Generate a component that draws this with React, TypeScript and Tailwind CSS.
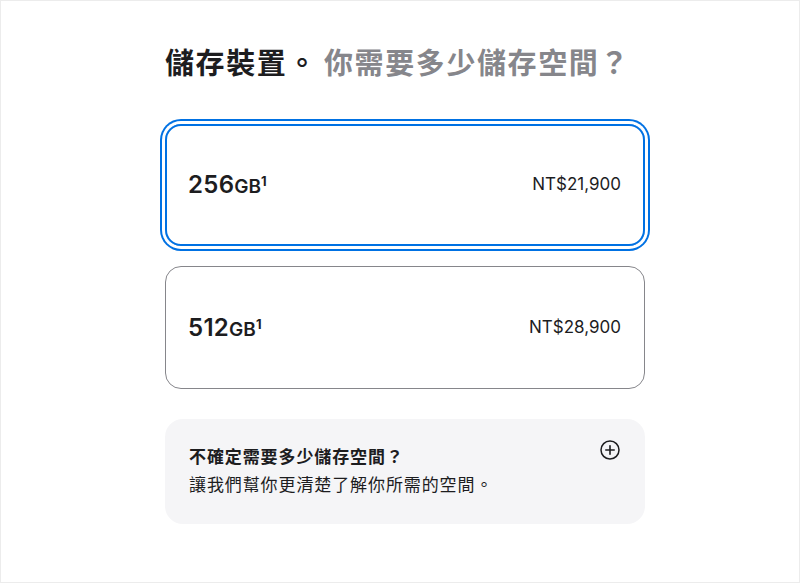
import React from "react";

const font = {
  fontFamily:
    'Inter, "Noto Sans CJK TC", "Noto Sans", sans-serif',
};

export default function App() {
  return (
    <div
      className="w-[800px] h-[583px] bg-white border border-[#ececec] overflow-hidden"
      style={font}
    >
      <div className="ml-[164px] w-[480px] pt-[45px]">
        <h2 className="text-[29px] leading-[36px] font-semibold tracking-[1.6px] text-[#1d1d1f]">
          儲存裝置。<span className="ml-[6px] text-[#86868b]">你需要多少儲存空間？</span>
        </h2>

        <div className="mt-[42px] flex flex-col gap-[20px]">
          <div className="h-[122px] rounded-[16px] border-2 border-[#0071e3] shadow-[0_0_0_3px_#ffffff,0_0_0_5px_#0071e3] flex items-center justify-between pl-[21px] pr-[22px]">
            <div className="text-[#1d1d1f] font-semibold leading-none">
              <span className="text-[24px] tracking-[0.3px]">256</span>
              <span className="text-[19px]">GB</span>
              <span className="text-[13px] font-bold align-[7px]">1</span>
            </div>
            <div className="text-[17px] text-[#1d1d1f]">NT$21,900</div>
          </div>

          <div className="h-[123px] rounded-[16px] border border-[#86868b] flex items-center justify-between pl-[22px] pr-[23px]">
            <div className="text-[#1d1d1f] font-semibold leading-none">
              <span className="text-[24px] tracking-[0.3px]">512</span>
              <span className="text-[19px]">GB</span>
              <span className="text-[13px] font-bold align-[7px]">1</span>
            </div>
            <div className="text-[17px] text-[#1d1d1f]">NT$28,900</div>
          </div>
        </div>

        <div className="mt-[30px] h-[105px] rounded-[18px] bg-[#f5f5f7] flex justify-between pl-[24px] pr-[25px] pt-[24px]">
          <div className="text-[17px] text-[#1d1d1f] tracking-[0.9px]">
            <div className="font-semibold leading-[28px]">不確定需要多少儲存空間？</div>
            <div className="leading-[28px]">讓我們幫你更清楚了解你所需的空間。</div>
          </div>
          <svg width="20" height="20" viewBox="0 0 20 20" className="mt-[-3px]">
            <circle cx="10" cy="10" r="9" fill="none" stroke="#1d1d1f" strokeWidth="1.5" />
            <path d="M10 5.8v8.4M5.8 10h8.4" stroke="#1d1d1f" strokeWidth="1.6" strokeLinecap="round" />
          </svg>
        </div>
      </div>
    </div>
  );
}
